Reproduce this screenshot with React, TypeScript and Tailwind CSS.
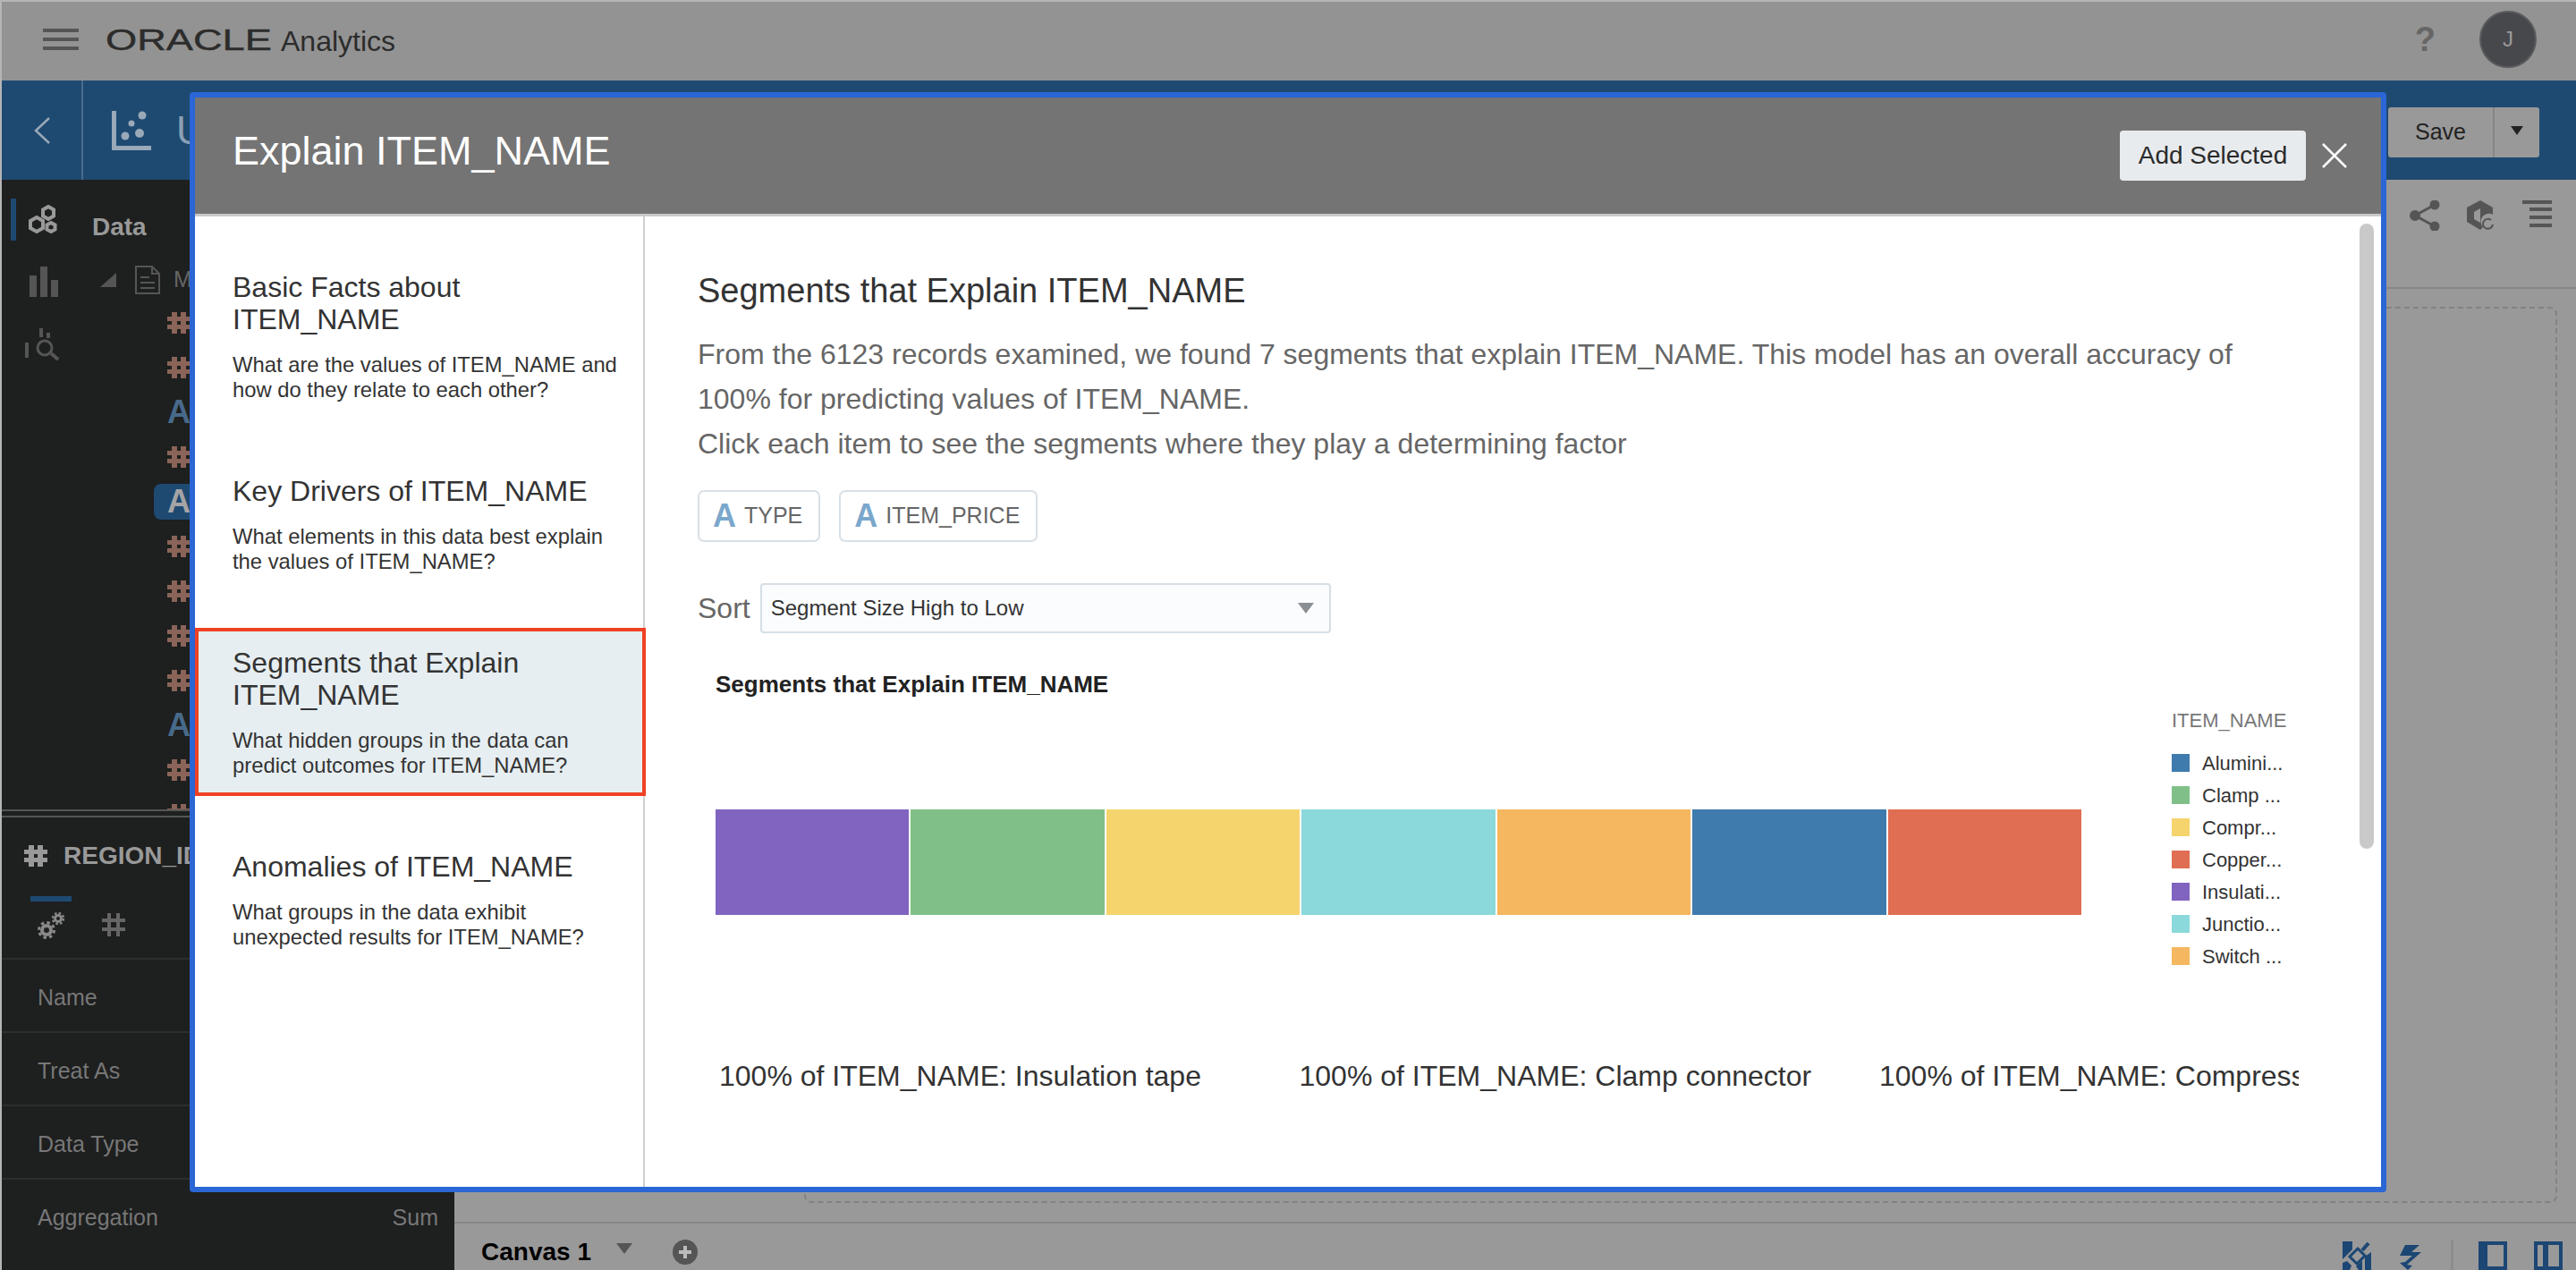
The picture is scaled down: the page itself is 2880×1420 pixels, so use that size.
import React from 'react';

const font = "font-['Liberation_Sans',Arial,sans-serif]";

const navItems = [
  { title: ['Basic Facts about', 'ITEM_NAME'], desc: ['What are the values of ITEM_NAME and', 'how do they relate to each other?'] },
  { title: ['Key Drivers of ITEM_NAME'], desc: ['What elements in this data best explain', 'the values of ITEM_NAME?'] },
  { title: ['Segments that Explain', 'ITEM_NAME'], desc: ['What hidden groups in the data can', 'predict outcomes for ITEM_NAME?'], active: true },
  { title: ['Anomalies of ITEM_NAME'], desc: ['What groups in the data exhibit', 'unexpected results for ITEM_NAME?'] },
];

const segments = ['#8064c0', '#80c088', '#f5d46e', '#8bd9da', '#f5b75f', '#3f7bad', '#e06e52'];

const legend = [
  { color: '#3f7bad', label: 'Alumini...' },
  { color: '#80c088', label: 'Clamp ...' },
  { color: '#f5d46e', label: 'Compr...' },
  { color: '#e06e52', label: 'Copper...' },
  { color: '#8064c0', label: 'Insulati...' },
  { color: '#8bd9da', label: 'Junctio...' },
  { color: '#f5b75f', label: 'Switch ...' },
];

const labels = [
  '100% of ITEM_NAME: Insulation tape',
  '100% of ITEM_NAME: Clamp connector',
  '100% of ITEM_NAME: Compression connector',
];

// tree rows behind the modal, only their left edge shows
const treeRows = ['#', '#', 'A', '#', 'S', '#', '#', '#', '#', 'A', '#', '#'];

const HashIcon = ({ color }: { color: string }) => (
  <svg width="26" height="24" viewBox="0 0 26 24" fill={color}>
    <path d="M5 0h6v5h4V0h6v5h5v5h-5v4h5v5h-5v5h-6v-5h-4v5H5v-5H0v-5h5v-4H0V5h5zM11 10v4h4v-4z" fillRule="evenodd" />
  </svg>
);

const Chip = ({ label }: { label: string }) => (
  <div className="flex h-[58px] items-center gap-[9px] rounded-[7px] border-2 border-[#d8e0e7] pl-[15px] pr-[18px]">
    <span className="text-[36px] font-bold leading-none text-[#7ba7cc]">A</span>
    <span className="text-[25px] text-[#666]">{label}</span>
  </div>
);

const NavIcons = () => (
  <div className="flex w-[91px] shrink-0 flex-col">
    <div className="mt-[21px] flex h-[47px] items-center">
      <div className="ml-[10px] h-full w-[6px] bg-[#1e4a72]" />
      <svg width="32" height="33" viewBox="0 0 32 33" className="ml-[14px]" fill="none" stroke="#999" strokeWidth="4">
        <path d="M22 2l6 3.5v7L22 16l-6-3.5v-7z" />
        <path d="M9 14l7 4v8l-7 4-7-4v-8z" />
        <path d="M25 20l4.500 2.500v5L25 30l-4.500-2.500v-5z" />
      </svg>
    </div>
    <svg width="32" height="34" viewBox="0 0 32 34" className="ml-[31px] mt-[29px]" fill="#555">
      <rect x="0" y="10" width="8" height="24" />
      <rect x="12" y="0" width="8" height="34" />
      <rect x="24" y="15" width="8" height="19" />
    </svg>
    <svg width="40" height="36" viewBox="0 0 40 36" className="ml-[26px] mt-[35px]" fill="none" stroke="#555" strokeWidth="3">
      <path d="M2 16v17" strokeWidth="4" />
      <path d="M18 0v10M26 5v6" strokeWidth="4" />
      <circle cx="22" cy="22" r="8" />
      <path d="M29 28l8 7" strokeWidth="4" />
    </svg>
  </div>
);

const Sidebar = () => (
  <aside className="flex w-[506px] shrink-0 flex-col bg-[#1e1f1f]">
    <div className="flex h-[704px] overflow-hidden">
      <NavIcons />
      <div className="flex min-w-0 flex-1 flex-col">
        <div className="ml-[10px] mt-[36px] h-[34px] text-[28px] font-bold leading-[34px] text-[#999]">Data</div>
        <div className="mt-[25px] flex h-[34px] items-center">
          <svg width="18" height="16" viewBox="0 0 18 16" className="ml-[19px]" fill="#555">
            <path d="M18 0v16H0z" />
          </svg>
          <svg width="28" height="32" viewBox="0 0 28 32" className="ml-[21px]" fill="none" stroke="#555" strokeWidth="2">
            <path d="M1 1h18l8 8v22H1zM19 1v8h8M6 13h10M6 19h16M6 25h16" />
          </svg>
          <span className="ml-[15px] text-[25px] text-[#666]">Ma</span>
        </div>
        <div className="mt-[6px] flex flex-col">
          {treeRows.map((row, i) => (
            <div key={i} className="flex h-[50px] shrink-0 items-center">
              {row === '#' ? (
                <div className="ml-[94px]"><HashIcon color="#8a6458" /></div>
              ) : row === 'S' ? (
                <div className="ml-[79px] flex h-[40px] w-[200px] items-center rounded-[8px] bg-[#1e4a72] pl-[15px] text-[36px] font-bold text-[#a5a5a5]">A</div>
              ) : (
                <span className="ml-[94px] text-[36px] font-bold leading-none text-[#486a8a]">{row}</span>
              )}
            </div>
          ))}
        </div>
      </div>
    </div>
    <div className="h-[2px] bg-[#555]" />
    <div className="mt-[5px] h-[2px] bg-[#555]" />
    <div className="flex h-[70px] items-center gap-[18px] whitespace-nowrap pl-[25px] pt-[16px]">
      <HashIcon color="#999" />
      <span className="text-[28px] font-bold text-[#999]">REGION_ID</span>
    </div>
    <div className="ml-[32px] mt-[18px] h-[6px] w-[46px] bg-[#1e4a72]" />
    <div className="flex h-[63px] items-start gap-[42px] pl-[40px] pt-[12px]">
      <svg width="30" height="30" viewBox="0 0 30 30" fill="none" stroke="#888">
        <circle cx="10" cy="20" r="5" strokeWidth="4" />
        <circle cx="10" cy="20" r="8.500" strokeWidth="3" strokeDasharray="3.500 3.200" />
        <circle cx="23" cy="7" r="3.500" strokeWidth="3" />
        <circle cx="23" cy="7" r="6" strokeWidth="2.500" strokeDasharray="2.500 2.200" />
      </svg>
      <svg width="26" height="28" viewBox="0 0 26 28" fill="none" stroke="#666" strokeWidth="4">
        <path d="M8 1v26M18 1v26M0 9h26M0 19h26" />
      </svg>
    </div>
    {['Name', 'Treat As', 'Data Type', 'Aggregation'].map((name) => (
      <div key={name} className="flex h-[82px] shrink-0 items-center justify-between border-t-2 border-[#2c2d2d] pl-[40px] pr-[18px] pt-[5px] text-[25px] text-[#777]">
        <span>{name}</span>
        {name === 'Aggregation' && <span>Sum</span>}
      </div>
    ))}
  </aside>
);

const Modal = () => (
  <div className="absolute left-[210px] top-[101px] flex h-[1230px] w-[2456px] flex-col overflow-hidden rounded-[4px] border-[6px] border-[#2a66d6]">
    <div className="flex h-[133px] shrink-0 items-center justify-between border-b-[3px] border-[#c9c9c9] bg-[#747474] pl-[42px] pr-[38px]">
      <span className="mb-[12px] text-[45px] leading-none text-white">Explain ITEM_NAME</span>
      <div className="flex items-center gap-[18px]">
        <button className="flex h-[56px] w-[208px] items-center justify-center rounded-[4px] bg-[#e8ebee] text-[28px] text-[#2b2b2b]">Add Selected</button>
        <svg width="28" height="28" viewBox="0 0 28 28" stroke="#fff" strokeWidth="2.500">
          <path d="M1 1l26 26M27 1L1 27" />
        </svg>
      </div>
    </div>
    <div className="relative flex min-h-0 flex-1 bg-white">
      <div className="flex w-[503px] shrink-0 flex-col gap-[40px] border-r-2 border-[#cfcfcf] pt-[40px]">
        {navItems.map((item) => (
          <div key={item.title[0]} className={`border-[4px] pb-[16px] pl-[38px] pr-[10px] pt-[17px] ${item.active ? 'w-[504px] border-[#ef4123] bg-[#e6eef1]' : 'border-transparent'}`}>
            <div className="text-[32px] leading-[36px] text-[#333]">
              {item.title.map((line) => <div key={line}>{line}</div>)}
            </div>
            <div className="mt-[19px] text-[23.800px] leading-[28px] text-[#333]">
              {item.desc.map((line) => <div key={line}>{line}</div>)}
            </div>
          </div>
        ))}
      </div>
      <div className="min-w-0 flex-1 pl-[59px] pt-[59px]">
        <h2 className="text-[38px] font-normal leading-[48px] text-[#333]">Segments that Explain ITEM_NAME</h2>
        <div className="mt-[22px] text-[32px] leading-[50px] text-[#666]">
          <div>From the 6123 records examined, we found 7 segments that explain ITEM_NAME. This model has an overall accuracy of</div>
          <div>100% for predicting values of ITEM_NAME.</div>
          <div>Click each item to see the segments where they play a determining factor</div>
        </div>
        <div className="mt-[27px] flex gap-[21px]">
          <Chip label="TYPE" />
          <Chip label="ITEM_PRICE" />
        </div>
        <div className="mt-[46px] flex items-center gap-[11px]">
          <span className="text-[32px] text-[#666]">Sort</span>
          <div className="flex h-[56px] w-[638px] items-center justify-between rounded-[4px] border-2 border-[#d6dfe6] bg-[#fbfcfe] pl-[10px] pr-[17px]">
            <span className="text-[24px] text-[#333]">Segment Size High to Low</span>
            <svg width="18" height="12" viewBox="0 0 18 12" fill="#8a8f93"><path d="M0 0h18L9 12z" /></svg>
          </div>
        </div>
        <div className="mt-[42px] flex h-[433px] pl-[20px]">
          <div className="w-[1527px] shrink-0">
            <div className="text-[26px] font-bold leading-[30px] text-[#222]">Segments that Explain ITEM_NAME</div>
            <div className="mt-[125px] flex h-[118px] gap-[2px]">
              {segments.map((color) => (
                <div key={color} className="flex-1" style={{ backgroundColor: color }} />
              ))}
            </div>
          </div>
          <div className="ml-[101px] pt-[43px]">
            <div className="text-[22px] leading-[26px] text-[#777]">ITEM_NAME</div>
            <div className="mt-[16px] flex flex-col">
              {legend.map((l) => (
                <div key={l.label} className="flex h-[36px] items-center gap-[14px] text-[22px] text-[#333]">
                  <span className="h-[20px] w-[20px]" style={{ backgroundColor: l.color }} />
                  <span>{l.label}</span>
                </div>
              ))}
            </div>
          </div>
        </div>
        <div className="ml-[24px] flex w-[1766px] overflow-hidden whitespace-nowrap text-[32px] leading-[40px] text-[#333]">
          {labels.map((label) => (
            <div key={label} className="w-[648.500px] shrink-0">{label}</div>
          ))}
        </div>
      </div>
      <div className="absolute right-[8px] top-[8px] h-[699px] w-[16px] rounded-full bg-[#c9c9c9]" />
    </div>
  </div>
);

export default function App() {
  return (
    <div className={`${font} relative flex h-[1420px] w-[2880px] flex-col overflow-hidden border-l-2 border-t-2 border-[#b5b5b5] bg-[#999]`}>
      <header className="flex h-[88px] shrink-0 items-center bg-[#939393] pb-[4px] pl-[46px] pr-[44px]">
        <div className="flex h-[24px] w-[40px] flex-col justify-between">
          <div className="h-[4px] bg-[#555]" />
          <div className="h-[4px] bg-[#555]" />
          <div className="h-[4px] bg-[#555]" />
        </div>
        <div className="ml-[30px] mt-[3px] w-[185px] shrink-0">
          <span className="inline-block origin-left scale-x-[1.37] text-[33px] leading-none text-[#2c2c2c] [-webkit-text-stroke:0.4px_#2c2c2c]">ORACLE</span>
        </div>
        <span className="ml-[11px] mt-[3px] text-[32px] text-[#2c2c2c]">Analytics</span>
        <span className="ml-auto text-[38px] font-bold text-[#666]">?</span>
        <div className="ml-[49px] flex h-[64px] w-[64px] items-center justify-center rounded-full border-2 border-[#5a5b5d] bg-[#47484c] text-[24px] text-[#999]">J</div>
      </header>
      <div className="flex h-[111px] shrink-0 items-center bg-[#1e4a72]">
        <div className="flex h-full w-[91px] items-center justify-center border-r-2 border-[#4a6c8c]">
          <svg width="18" height="30" viewBox="0 0 18 30" fill="none" stroke="#9aa9b8" strokeWidth="2.500"><path d="M17 1L2 15l15 14" /></svg>
        </div>
        <svg width="44" height="44" viewBox="0 0 44 44" className="ml-[32px]" fill="#9aa9b8">
          <path d="M0 0h5v39h39v5H0z" />
          <circle cx="34" cy="5" r="4.500" />
          <circle cx="22" cy="14" r="3.500" />
          <circle cx="31" cy="25" r="5" />
          <circle cx="15" cy="28" r="4.500" />
        </svg>
        <span className="ml-[28px] text-[44px] text-[#8ca0b4]">U</span>
        <div className="ml-auto mr-[41px] mt-[5px] flex h-[56px] w-[169px] rounded-[3px] bg-[#999] text-[#222]">
          <div className="flex w-[119px] items-center justify-center border-r-2 border-[#858585] text-[25px]">Save</div>
          <div className="flex flex-1 items-start justify-center pt-[21px]">
            <svg width="14" height="10" viewBox="0 0 14 10" fill="#222"><path d="M0 0h14L7 10z" /></svg>
          </div>
        </div>
      </div>
      <div className="flex min-h-0 flex-1">
        <Sidebar />
        <main className="flex min-w-0 flex-1 flex-col">
          <div className="flex h-[122px] shrink-0 items-start justify-end gap-[30px] border-b-2 border-[#868686] pr-[27px] pt-[23px]">
            <svg width="34" height="34" viewBox="0 0 34 34" fill="#555" stroke="#555" strokeWidth="3">
              <path d="M28 5L6 17l22 12" fill="none" />
              <circle cx="28" cy="5" r="4" />
              <circle cx="6" cy="17" r="4.500" />
              <circle cx="28" cy="29" r="4" />
            </svg>
            <svg width="32" height="34" viewBox="0 0 32 34" fill="#555">
              <path d="M15 0l14 8v8a9 9 0 0 0-11 14l-3 3-15-9V8zM15 9l-7 4v8l7 4z" fillRule="evenodd" />
              <path d="M29 27a5.500 5.500 0 1 1-2-5" fill="none" stroke="#555" strokeWidth="2" />
            </svg>
            <svg width="33" height="30" viewBox="0 0 33 30" fill="#555">
              <rect x="0" y="0" width="33" height="4" />
              <rect x="8" y="8" width="25" height="4" />
              <rect x="8" y="17" width="25" height="4" />
              <rect x="8" y="26" width="25" height="4" />
            </svg>
          </div>
          <div className="min-h-0 flex-1 pb-[21px] pl-[391px] pr-[21px] pt-[20px]">
            <div className="h-full rounded-[8px] border-2 border-dashed border-[#828282]" />
          </div>
          <div className="flex h-[54px] shrink-0 items-center border-t-2 border-[#868686] pl-[30px] pr-[15px]">
            <span className="mt-[12px] text-[28px] font-bold text-black">Canvas 1</span>
            <svg width="18" height="12" viewBox="0 0 18 12" className="ml-[28px] mt-[4px]" fill="#555"><path d="M0 0h18L9 12z" /></svg>
            <svg width="28" height="28" viewBox="0 0 28 28" className="ml-[45px] mt-[12px]">
              <circle cx="14" cy="14" r="14" fill="#555" />
              <path d="M14 7v14M7 14h14" stroke="#bbb" strokeWidth="4" />
            </svg>
            <svg width="32" height="32" viewBox="0 0 32 32" className="ml-auto self-end" fill="#1c4673">
              <path d="M0 0h11v9L0 20zM0 24l5-2 5 5-2 5H0zM22 32v-11l-7 7 3 4zM32 32H25V17l7-5z" />
              <path d="M8 17l9-9 8 8-9 9z" fill="none" stroke="#1c4673" strokeWidth="3" />
              <path d="M22 10l7-8" stroke="#1c4673" strokeWidth="4" />
            </svg>
            <svg width="24" height="28" viewBox="0 0 24 28" className="ml-[32px] self-end" fill="#1c4673">
              <path d="M6 0h16l-9 8h11L8 22l6 1-5 5-9-8 6-1 8-7H0z" />
            </svg>
            <div className="ml-[33px] h-[34px] w-[3px] self-end bg-[#8c8c8c]" />
            <div className="ml-[28px] h-[32px] w-[32px] self-end border-y-[4px] border-l-[10px] border-r-[4px] border-[#1c4673]" />
            <div className="ml-[30px] flex h-[32px] w-[32px] items-center self-end border-[4px] border-[#1c4673] pl-[6px]">
              <div className="h-full w-[6px] bg-[#1c4673]" />
            </div>
          </div>
        </main>
      </div>
      <Modal />
    </div>
  );
}
